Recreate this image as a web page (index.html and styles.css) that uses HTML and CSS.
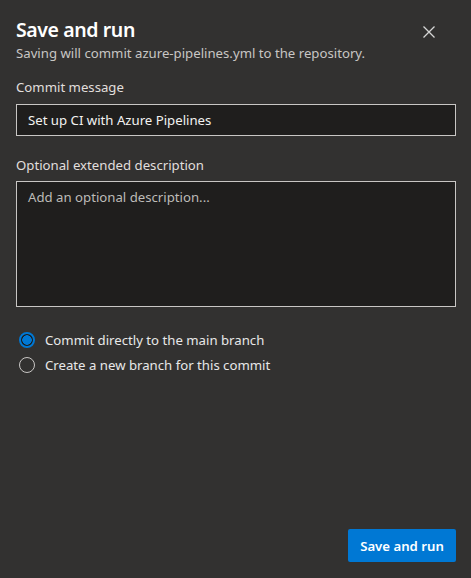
FILE: index.html
```html
<!DOCTYPE html>
<html>
<head>
<meta charset="utf-8">
<link rel="stylesheet" href="styles.css">
</head>
<body>
<div class="dialog">
  <div class="header">
    <div class="titles">
      <div class="title">Save and run</div>
      <div class="subtitle">Saving will commit azure-pipelines.yml to the repository.</div>
    </div>
    <button class="close" aria-label="Close">
      <svg width="12" height="12" viewBox="0 0 12 12"><path d="M0.5 0.5 L11.5 11.5 M11.5 0.5 L0.5 11.5" stroke="#d6d6d6" stroke-width="1.3" fill="none"/></svg>
    </button>
  </div>
  <div class="field">
    <div class="label">Commit message</div>
    <div class="input">Set up CI with Azure Pipelines</div>
  </div>
  <div class="field field2">
    <div class="label">Optional extended description</div>
    <div class="textarea">Add an optional description...</div>
  </div>
  <div class="radios">
    <div class="radio"><span class="dot checked"></span><span>Commit directly to the main branch</span></div>
    <div class="radio"><span class="dot"></span><span>Create a new branch for this commit</span></div>
  </div>
  <div class="footer">
    <button class="primary">Save and run</button>
  </div>
</div>
</body>
</html>
```
FILE: styles.css
```css
html, body {
  margin: 0;
  padding: 0;
  background: #323130;
}
.dialog {
  width: 471px;
  height: 578px;
  box-sizing: border-box;
  padding: 16px 15px 16px 16px;
  display: flex;
  flex-direction: column;
  font-family: "Segoe UI", "Noto Sans", sans-serif;
  color: #e8e8e8;
}
.header {
  display: flex;
  justify-content: space-between;
  align-items: flex-start;
}
.title {
  font-size: 19.5px;
  font-weight: 600;
  letter-spacing: -0.4px;
  color: #ffffff;
  line-height: 26px;
  margin-top: 1px;
}
.subtitle {
  font-size: 13.2px;
  color: #c8c6c4;
  line-height: 18px;
  margin-top: 1px;
}
.close {
  background: none;
  border: none;
  padding: 0;
  margin: 10px 21px 0 0;
  width: 12px;
  height: 12px;
  display: flex;
}
.field {
  margin-top: 15px;
  display: flex;
  flex-direction: column;
}
.field2 {
  margin-top: 19px;
}
.label {
  font-size: 13.2px;
  line-height: 20px;
  color: #e1dfdd;
  margin-bottom: 7px;
}
.field2 .label {
  margin-bottom: 6px;
}
.input {
  height: 32px;
  box-sizing: border-box;
  border: 1px solid #c8c6c4;
  background: #1f1e1d;
  padding: 0 11px;
  font-size: 13.2px;
  line-height: 30px;
  color: #f3f2f1;
}
.textarea {
  height: 126px;
  box-sizing: border-box;
  border: 1px solid #c8c6c4;
  background: #1f1e1d;
  padding: 5px 11px;
  font-size: 13.2px;
  line-height: 20px;
  color: #bdbbb8;
}
.radios {
  margin-top: 23px;
  display: flex;
  flex-direction: column;
  gap: 5px;
}
.radio {
  display: flex;
  align-items: center;
  gap: 10px;
  font-size: 13.2px;
  line-height: 20px;
  color: #e8e8e8;
  padding-left: 3px;
}
.dot {
  width: 16px;
  height: 16px;
  box-sizing: border-box;
  border-radius: 50%;
  border: 1px solid #c8c6c4;
  background: #323130;
  flex: none;
}
.dot.checked {
  border: 2px solid #0078d4;
  background: radial-gradient(circle, #0078d4 0 4.5px, #1b1a19 5px);
}
.footer {
  margin-top: auto;
  display: flex;
  justify-content: flex-end;
}
.primary {
  height: 33px;
  width: 108px;
  background: #0078d4;
  color: #ffffff;
  border: none;
  border-radius: 2px;
  font-family: inherit;
  font-size: 13.2px;
  font-weight: 600;
  padding: 0;
}
```
